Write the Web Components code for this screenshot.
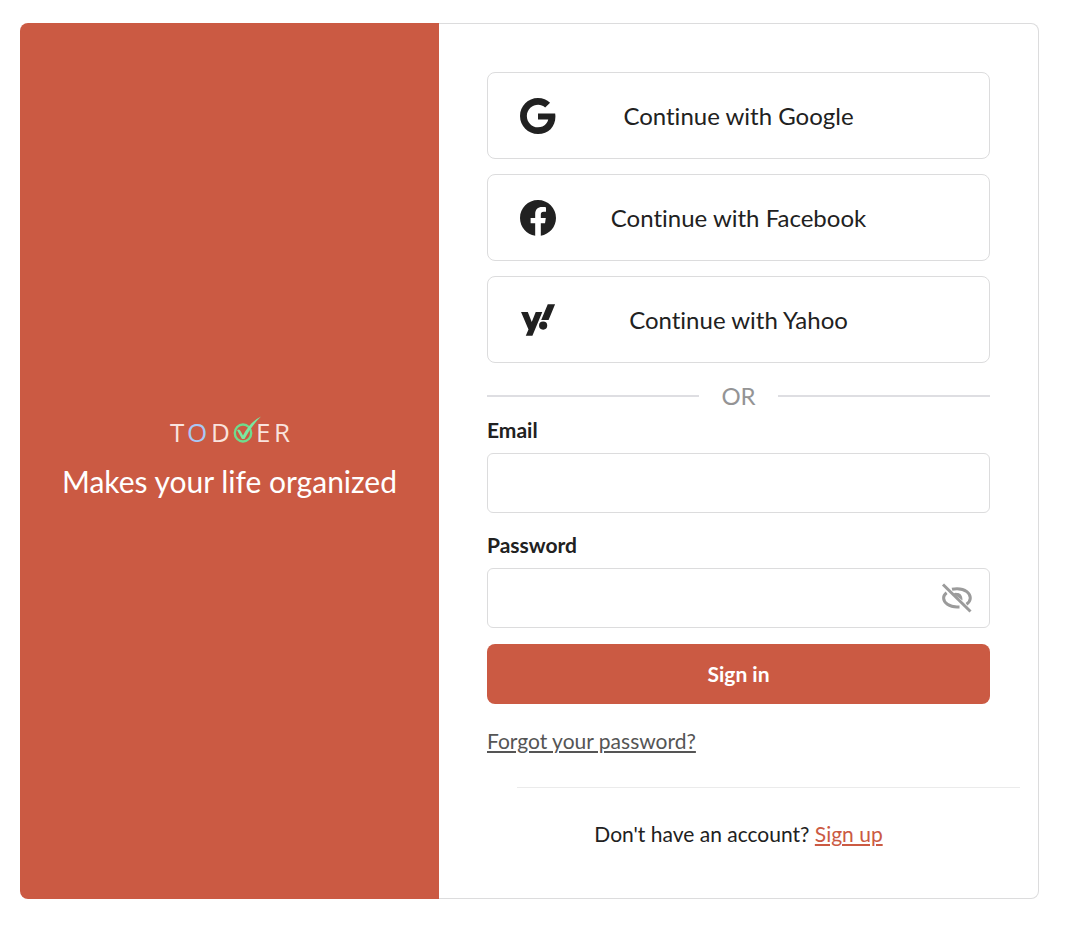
<!DOCTYPE html>
<html lang="en">
<head>
<meta charset="utf-8">
<meta name="viewport" content="width=device-width, initial-scale=1">
<title>Todoer – Sign in</title>
<style>
  body { margin: 0; background: #fff; color: #212121; font: 21px/32px Lato, "Open Sans", sans-serif; font-variant-ligatures: none; }
</style>
</head>
<body>
<sign-in-page></sign-in-page>
<script>
const define = (name, html, setup) => {
  const template = document.createElement('template');
  template.innerHTML = '<style>*{box-sizing:border-box}</style>' + html;
  customElements.define(name, class extends HTMLElement {
    constructor() {
      super();
      this.attachShadow({ mode: 'open' }).append(template.content.cloneNode(true));
    }
    connectedCallback() { if (setup) setup(this, this.shadowRoot); }
  });
};

define('todoer-logo', `
  <style>
    :host { display: block; }
    svg { display: block; overflow: visible; }
    text { font: 400 26px "Open Sans", "Noto Sans", sans-serif; fill: #f9e3de; }
    .blue { fill: #a9c8f5; }
  </style>
  <svg width="124" height="40" viewBox="0 0 124 40" role="img" aria-label="Todoer">
    <text y="29" x="2 19 43">T<tspan class="blue">O</tspan>D</text>
    <ellipse cx="75" cy="20" rx="8.200" ry="8.500" fill="none" stroke="#6fdc8c" stroke-width="2.400"/>
    <path d="M69 17Q71.500 15.500 72.500 18L75 22.500Q82 9 93 3.500Q84 12 76.500 26L74 26Z" fill="#7be8a0"/>
    <text y="29" x="88 106">ER</text>
  </svg>`);

define('brand-panel', `
  <style>
    :host { display: flex; flex-direction: column; align-items: center; justify-content: center; gap: 4px; padding: 0 24px 4px; background: #cb5a43; color: #fff; text-align: center; }
    p { margin: 0; font-size: 30px; line-height: 48px; }
  </style>
  <todoer-logo></todoer-logo>
  <p><slot></slot></p>`);

define('social-button', `
  <style>
    :host { display: block; }
    button { display: grid; grid-template-columns: 36px 1fr 36px; align-items: center; width: 100%; height: 87px; padding: 0 32px; border: 1px solid #dcdcdd; border-radius: 8px; background: #fff; color: #212121; font: 24px/36px Lato, sans-serif; font-variant-ligatures: none; cursor: pointer; }
    ::slotted(svg) { display: block; width: 36px; height: 36px; fill: #212121; }
  </style>
  <button type="button"><slot name="icon"></slot><span><slot></slot></span></button>`);

define('or-divider', `
  <style>
    :host { display: flex; align-items: center; gap: 22px; height: 36px; color: #949495; font-size: 24px; line-height: 36px; }
    :host::before, :host::after { content: ""; flex: 1; height: 2px; background: #dedee2; }
  </style>
  <slot></slot>`);

define('form-field', `
  <style>
    :host { display: block; }
    label { display: block; margin-bottom: 7px; font-weight: 700; line-height: 32px; }
    .box { display: flex; align-items: center; height: 60px; border: 1px solid #dcdcdd; border-radius: 6px; background: #fff; }
    input { flex: 1; min-width: 0; height: 100%; padding: 0 16px; border: 0; outline: 0; background: none; color: inherit; font: inherit; }
    .box:focus-within { border-color: #cb5a43; }
  </style>
  <label for="control"><slot></slot></label>
  <div class="box"><input id="control"><slot name="action"></slot></div>`,
  (host, root) => {
    const input = root.querySelector('input');
    input.type = host.getAttribute('type') || 'text';
    input.name = host.getAttribute('name');
  });

define('reveal-button', `
  <style>
    :host { display: block; padding-right: 14px; }
    button { display: block; padding: 0; border: 0; background: none; cursor: pointer; }
    svg { display: block; }
  </style>
  <button type="button" aria-label="Show password">
    <svg width="36" height="36" viewBox="0 0 36 36" fill="none" stroke="#9b9b9b" stroke-width="3">
      <path d="M13 9.300Q15.300 8.700 18 8.700C26.500 8.700 31.300 13.500 31.300 18C31.300 20.400 30 22.400 27.500 24.200"/>
      <path d="M7.600 12.800C5.600 14.300 4.600 16 4.600 18C4.600 22.700 10.200 27 18 27H20.500"/>
      <path d="M14.500 13.700Q16 12.500 18 13C21.500 13 23.600 15.600 23.500 20.500Z" fill="#9b9b9b" stroke="none"/>
      <path d="M4 4.500L31.500 31.500"/>
    </svg>
  </button>`);

define('submit-button', `
  <style>
    :host { display: block; }
    button { display: block; width: 100%; height: 60px; padding: 0; border: 0; border-radius: 8px; background: #cb5a43; color: #fff; font: 700 21px/32px Lato, sans-serif; cursor: pointer; }
  </style>
  <button type="button"><slot></slot></button>`);

define('sign-in-form', `
  <style>
    :host { display: block; padding: 48px; border: 1px solid #dcdcdd; border-left: 0; border-radius: 0 8px 8px 0; }
    .providers { display: grid; gap: 15px; margin-bottom: 15px; }
    form-field { margin-bottom: 16px; }
    .forgot { margin: 21px 0 30px; }
    .forgot a { color: #555; }
    hr { height: 1px; margin: 0 -30px 30px 30px; border: 0; background: #ebebeb; }
    .join { margin: 0; text-align: center; }
    .join a { color: #cb5a43; }
  </style>
  <div class="providers">
    <social-button><svg slot="icon" viewBox="0 8 496 496" aria-hidden="true"><path d="M488 261.800C488 403.300 391.100 504 248 504 110.800 504 0 393.200 0 256S110.800 8 248 8c66.800 0 123 24.500 166.300 64.900l-67.500 64.900C258.500 52.600 94.300 116.600 94.300 256c0 86.500 69.100 156.600 153.700 156.600 98.200 0 135-70.400 140.800-106.900H248v-85.300h236.100c2.300 12.700 3.900 24.900 3.900 41.400z"/></svg>Continue with Google</social-button>
    <social-button><svg slot="icon" viewBox="8 8 496 496" aria-hidden="true"><path d="M504 256C504 119 393 8 256 8S8 119 8 256c0 123.780 90.690 226.380 209.250 245V327.690h-63V256h63v-54.640c0-62.150 37-96.480 93.670-96.480 27.140 0 55.520 4.840 55.520 4.840v61h-31.280c-30.800 0-40.410 19.120-40.410 38.730V256h68.780l-11 71.690h-57.780V501C413.310 479.380 504 379.780 504 256z"/></svg>Continue with Facebook</social-button>
    <social-button><svg slot="icon" viewBox="0 0 512 512" aria-hidden="true"><path d="M223.690 141.060L167 284.230 111 141.060H14.930L120.760 390.190 82.190 480h94.170L317.270 141.060ZM329.090 276.850a58.220 58.220 0 1 0 58.220 58.220A58.220 58.220 0 0 0 329.090 276.850ZM394.650 32l-93 223.470H406.440L499.070 32Z"/></svg>Continue with Yahoo</social-button>
  </div>
  <or-divider>OR</or-divider>
  <form>
    <form-field name="email" type="email">Email</form-field>
    <form-field name="password" type="password">Password<reveal-button slot="action"></reveal-button></form-field>
    <submit-button>Sign in</submit-button>
  </form>
  <p class="forgot"><a href="#forgot">Forgot your password?</a></p>
  <hr>
  <p class="join">Don't have an account? <a href="#signup">Sign up</a></p>`);

define('sign-in-page', `
  <style>
    :host { display: block; padding: 23px 26px 32px 20px; }
    main { display: grid; grid-template-columns: minmax(0, 419fr) minmax(0, 600fr); }
    brand-panel { border-radius: 8px 0 0 8px; }
  </style>
  <main>
    <brand-panel>Makes your life organized</brand-panel>
    <sign-in-form></sign-in-form>
  </main>`);
</script>
</body>
</html>
